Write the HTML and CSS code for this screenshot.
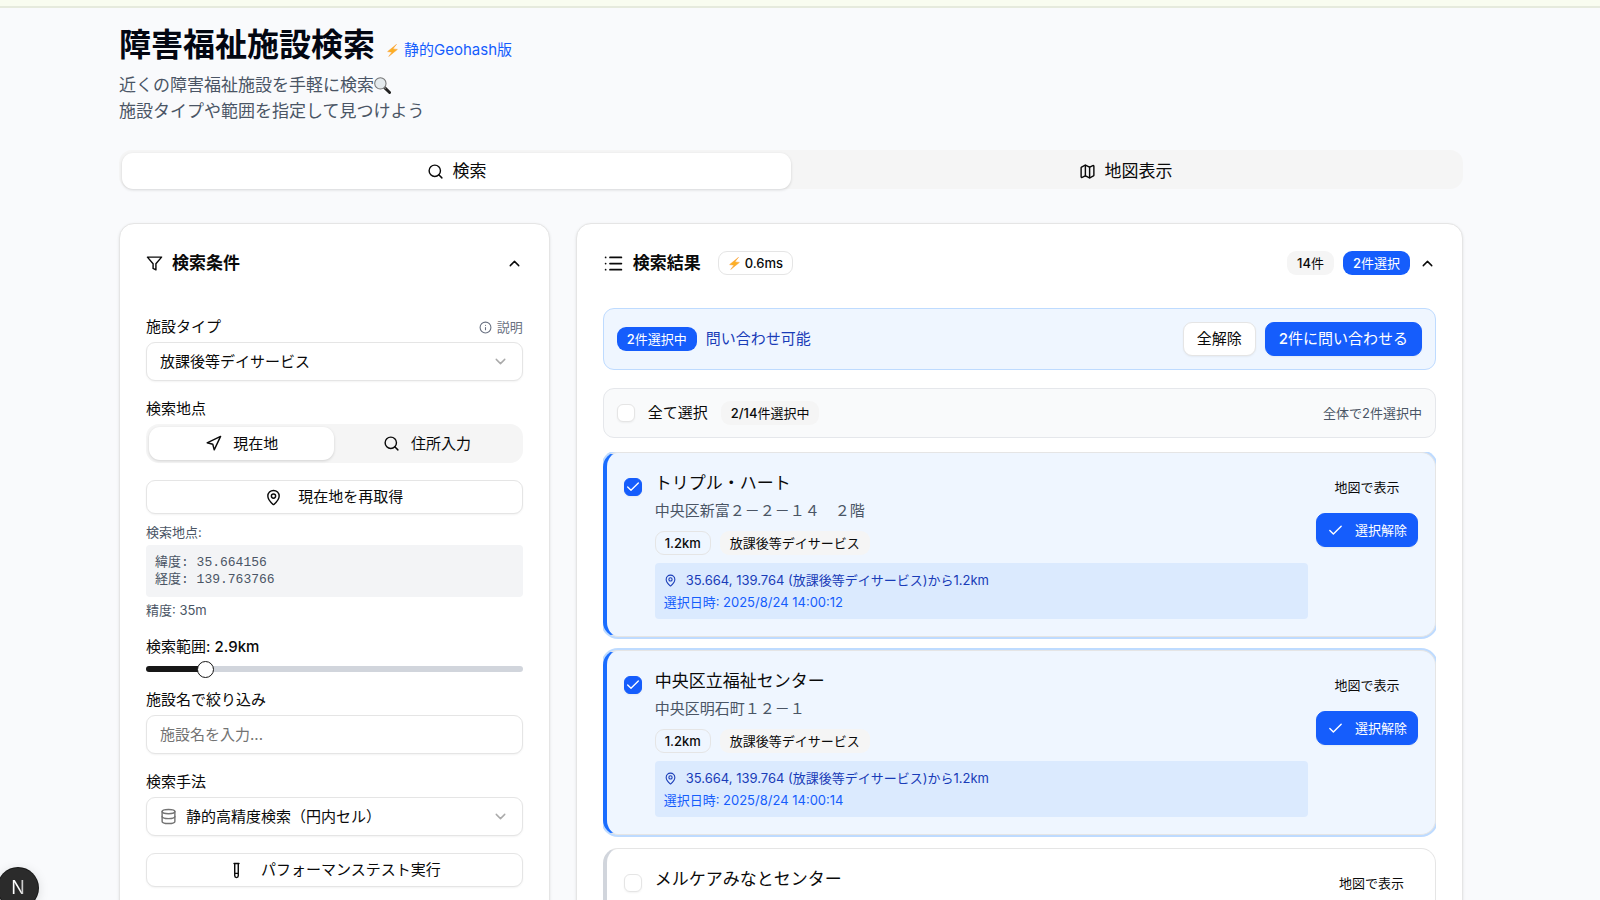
FILE: index.html
```html
<!DOCTYPE html>
<html lang="ja">

<head>
  <meta charset="UTF-8">
  <meta name="viewport" content="width=device-width, initial-scale=1.0">
  <title>障害福祉施設検索</title>

  <link rel="stylesheet" href="styles.css">
</head>

<body>
  <!-- shared icons -->
  <svg class="sprite" aria-hidden="true">
    <symbol id="i-search" viewBox="0 0 24 24"><circle cx="11" cy="11" r="8" /><path d="m21 21-4.3-4.3" /></symbol>
    <symbol id="i-map" viewBox="0 0 24 24"><path d="M14.106 5.553a2 2 0 0 0 1.788 0l3.659-1.83A1 1 0 0 1 21 4.619v12.764a1 1 0 0 1-.553.894l-4.553 2.277a2 2 0 0 1-1.788 0l-4.212-2.106a2 2 0 0 0-1.788 0l-3.659 1.83A1 1 0 0 1 3 19.381V6.618a1 1 0 0 1 .553-.894l4.553-2.277a2 2 0 0 1 1.788 0z" /><path d="M15 5.764v15M9 3.236v15" /></symbol>
    <symbol id="i-filter" viewBox="0 0 24 24"><path d="M22 3H2l8 9.46V19l4 2v-8.54z" /></symbol>
    <symbol id="i-up" viewBox="0 0 24 24"><path d="m18 15-6-6-6 6" /></symbol>
    <symbol id="i-down" viewBox="0 0 24 24"><path d="m6 9 6 6 6-6" /></symbol>
    <symbol id="i-info" viewBox="0 0 24 24"><circle cx="12" cy="12" r="10" /><path d="M12 16v-4M12 8h.01" /></symbol>
    <symbol id="i-nav" viewBox="0 0 24 24"><path d="m3 11 19-9-9 19-2-8z" /></symbol>
    <symbol id="i-pin" viewBox="0 0 24 24"><path d="M20 10c0 4.993-5.539 10.193-7.399 11.799a1 1 0 0 1-1.202 0C9.539 20.193 4 14.993 4 10a8 8 0 0 1 16 0" /><circle cx="12" cy="10" r="3" /></symbol>
    <symbol id="i-db" viewBox="0 0 24 24"><ellipse cx="12" cy="5" rx="9" ry="3" /><path d="M3 5v14a9 3 0 0 0 18 0V5" /><path d="M3 12a9 3 0 0 0 18 0" /></symbol>
    <symbol id="i-tube" viewBox="0 0 24 24"><path d="M14.5 2v17.5c0 1.4-1.1 2.5-2.5 2.5s-2.5-1.1-2.5-2.5V2M8.5 2h7M14.5 16h-5" /></symbol>
    <symbol id="i-list" viewBox="0 0 24 24"><path d="M3 5h.01M3 12h.01M3 19h.01M8 5h13M8 12h13M8 19h13" /></symbol>
    <symbol id="i-check" viewBox="0 0 24 24"><path d="M20 6 9 17l-5-5" /></symbol>
    <symbol id="i-bolt" viewBox="0 0 24 24"><path d="M19 1 3 14l8 1-6 8 16-13-8-1z" fill="#fdb022" stroke="#f9a23b" stroke-width="1" /></symbol>
    <symbol id="i-glass" viewBox="0 0 24 24"><path d="m15 15 7 7" stroke="#222" stroke-width="4" /><path d="m13 13 3 3" stroke="#777" stroke-width="2" /><circle cx="9" cy="9" r="8" fill="#e4eaed" stroke="#777" stroke-width="1.5" /></symbol>
  </svg>

  <div class="top-strip"></div>

  <main class="container">
    <header class="page-header">
      <h1>障害福祉施設検索</h1>
      <span class="version"><svg class="icon icon-sm"><use href="#i-bolt" /></svg>静的Geohash版</span>
    </header>
    <p class="lead">近くの障害福祉施設を手軽に検索<svg class="icon glass"><use href="#i-glass" /></svg><br>施設タイプや範囲を指定して見つけよう</p>

    <nav class="tabs main-tabs">
      <button class="tab active"><svg class="icon"><use href="#i-search" /></svg>検索</button>
      <button class="tab"><svg class="icon"><use href="#i-map" /></svg>地図表示</button>
    </nav>

    <div class="columns">
      <section class="card">
        <div class="card-head">
          <h2><svg class="icon"><use href="#i-filter" /></svg>検索条件</h2>
          <button class="toggle" aria-label="検索条件を閉じる"><svg class="icon"><use href="#i-up" /></svg></button>
        </div>

        <form class="conditions">
          <div class="field first-field">
            <div class="label-row">
              <label for="type">施設タイプ</label>
              <button type="button" class="help"><svg class="icon icon-sm"><use href="#i-info" /></svg>説明</button>
            </div>
            <div class="select">
              <select id="type"><option>放課後等デイサービス</option></select>
              <svg class="icon arrow"><use href="#i-down" /></svg>
            </div>
          </div>

          <div class="field">
            <span class="label">検索地点</span>
            <div class="tabs">
              <button type="button" class="tab active"><svg class="icon"><use href="#i-nav" /></svg>現在地</button>
              <button type="button" class="tab"><svg class="icon"><use href="#i-search" /></svg>住所入力</button>
            </div>
          </div>

          <div class="location">
            <button type="button" class="btn"><svg class="icon"><use href="#i-pin" /></svg>現在地を再取得</button>
            <div class="position">
              <span>検索地点:</span>
              <div class="coords">緯度: 35.664156<br>経度: 139.763766</div>
              <span>精度: 35m</span>
            </div>
          </div>

          <div class="field range-field">
            <label for="range">検索範囲: <b>2.9km</b></label>
            <input type="range" id="range" min="0.1" max="20" step="0.1" value="2.9">
          </div>

          <div class="field">
            <label for="name">施設名で絞り込み</label>
            <input type="text" id="name" class="text-input" placeholder="施設名を入力...">
          </div>

          <div class="field">
            <label for="method">検索手法</label>
            <div class="select">
              <svg class="icon db"><use href="#i-db" /></svg>
              <select id="method"><option>静的高精度検索（円内セル）</option></select>
              <svg class="icon arrow"><use href="#i-down" /></svg>
            </div>
          </div>

          <button type="button" class="btn"><svg class="icon"><use href="#i-tube" /></svg>パフォーマンステスト実行</button>
        </form>
      </section>

      <section class="card results">
        <div class="card-head">
          <h2><svg class="icon icon-lg"><use href="#i-list" /></svg>検索結果</h2>
          <span class="badge outline time"><svg class="icon icon-sm"><use href="#i-bolt" /></svg><b>0.6ms</b></span>
          <div class="counts">
            <span class="badge gray"><b>14</b>件</span>
            <span class="badge blue"><b>2</b>件選択</span>
            <button class="toggle" aria-label="検索結果を閉じる"><svg class="icon"><use href="#i-up" /></svg></button>
          </div>
        </div>

        <div class="banner">
          <span class="badge blue"><b>2</b>件選択中</span>
          <span class="banner-text">問い合わせ可能</span>
          <button class="btn">全解除</button>
          <button class="btn primary"><span><b>2</b>件に問い合わせる</span></button>
        </div>

        <div class="select-all">
          <input type="checkbox" id="all">
          <label for="all">全て選択</label>
          <span class="badge gray"><b>2/14</b>件選択中</span>
          <span class="total">全体で2件選択中</span>
        </div>

        <div class="list">
          <article class="item selected">
            <input type="checkbox" id="f1" checked>
            <div class="info">
              <h3><label for="f1">トリプル・ハート</label></h3>
              <p class="address">中央区新富２－２－１４　２階</p>
              <div class="badges">
                <span class="badge outline"><b>1.2km</b></span>
                <span class="badge gray">放課後等デイサービス</span>
              </div>
              <div class="origin">
                <p><svg class="icon icon-sm"><use href="#i-pin" /></svg>35.664, 139.764 (放課後等デイサービス)から1.2km</p>
                <p class="date">選択日時: 2025/8/24 14:00:12</p>
              </div>
            </div>
            <div class="actions">
              <button class="btn ghost">地図で表示</button>
              <button class="btn primary small"><svg class="icon"><use href="#i-check" /></svg>選択解除</button>
            </div>
          </article>

          <article class="item selected">
            <input type="checkbox" id="f2" checked>
            <div class="info">
              <h3><label for="f2">中央区立福祉センター</label></h3>
              <p class="address">中央区明石町１２－１</p>
              <div class="badges">
                <span class="badge outline"><b>1.2km</b></span>
                <span class="badge gray">放課後等デイサービス</span>
              </div>
              <div class="origin">
                <p><svg class="icon icon-sm"><use href="#i-pin" /></svg>35.664, 139.764 (放課後等デイサービス)から1.2km</p>
                <p class="date">選択日時: 2025/8/24 14:00:14</p>
              </div>
            </div>
            <div class="actions">
              <button class="btn ghost">地図で表示</button>
              <button class="btn primary small"><svg class="icon"><use href="#i-check" /></svg>選択解除</button>
            </div>
          </article>

          <article class="item">
            <input type="checkbox" id="f3">
            <div class="info">
              <h3><label for="f3">メルケアみなとセンター</label></h3>
            </div>
            <div class="actions">
              <button class="btn ghost">地図で表示</button>
            </div>
          </article>
        </div>
      </section>
    </div>
  </main>

  <button class="dev-badge" aria-label="Next.js"><span>N</span></button>
</body>

</html>
```
FILE: styles.css
```css
* {
  box-sizing: border-box;
}

body {
  background: #f9fafc;
  color: #0a0a0a;
  font-family: Inter, "Noto Sans CJK JP", sans-serif;
  font-size: 15px;
  line-height: 22px;
  margin: 0;
}

h1,
h2,
h3,
p {
  margin: 0;
}

b {
  font-weight: 500;
}

button,
input,
select {
  color: inherit;
  font: inherit;
}

button {
  background: none;
  border: 0;
  cursor: pointer;
  padding: 0;
}

.sprite {
  display: none;
}

.icon {
  fill: none;
  flex: none;
  height: 17px;
  stroke: currentColor;
  stroke-linecap: round;
  stroke-linejoin: round;
  stroke-width: 2;
  width: 17px;
}

.icon-sm {
  height: 13px;
  width: 13px;
}

.icon-lg {
  height: 21px;
  width: 21px;
}

.top-strip {
  background: #f9fcf0;
  border-bottom: 2px solid #e6eadd;
  height: 8px;
}

.container {
  margin: 0 auto;
  max-width: 1398px;
  padding: 17px 36px 34px 18px;
}

/* header */
.page-header {
  align-items: flex-end;
  display: flex;
  gap: 11px;
}

h1 {
  color: #030712;
  font-size: 32px;
  line-height: 40px;
}

.version {
  align-items: center;
  color: #155dfc;
  display: flex;
  gap: 5px;
  line-height: 30px;
}

.lead {
  color: #4a5565;
  font-size: 17px;
  line-height: 26px;
  margin-top: 7px;
}

.glass {
  vertical-align: -3px;
}

/* tabs */
.tabs {
  background: #f5f5f5;
  border-radius: 13px;
  display: grid;
  grid-template-columns: 1fr 1fr;
  height: 39px;
  padding: 3px;
}

.tab {
  align-items: center;
  border-radius: 11px;
  display: flex;
  gap: 11px;
  justify-content: center;
}

.tab.active {
  background: #fff;
  box-shadow: 0 1px 3px rgba(0, 0, 0, 0.15);
}

.main-tabs {
  font-size: 17px;
  margin-top: 26px;
  padding-bottom: 0;
}

.main-tabs .tab {
  gap: 9px;
}

/* cards */
.columns {
  display: grid;
  gap: 26px;
  grid-template-columns: repeat(3, 1fr);
  margin-top: 34px;
}

.card {
  background: #fff;
  border: 1px solid #e5e5e5;
  border-radius: 15px;
  box-shadow: 0 1px 3px rgba(0, 0, 0, 0.1);
  min-width: 0;
  padding: 26px;
}

.results {
  grid-column: span 2;
}

.card-head {
  align-items: center;
  display: flex;
  height: 26px;
  justify-content: space-between;
  margin-bottom: 32px;
}

h2 {
  align-items: center;
  display: flex;
  font-size: 17px;
  gap: 9px;
}

.toggle {
  display: flex;
}

.time {
  gap: 4px;
  margin-left: 17px;
}

.counts {
  align-items: center;
  display: flex;
  gap: 9px;
  margin-left: auto;
}

/* search conditions */
.conditions {
  display: flex;
  flex-direction: column;
  gap: 17px;
}

.field {
  display: flex;
  flex-direction: column;
  gap: 4px;
}

.first-field {
  padding-top: 8px;
}

.label-row {
  align-items: center;
  display: flex;
  justify-content: space-between;
}

.help {
  align-items: center;
  color: #6a7282;
  display: flex;
  font-size: 13px;
  gap: 5px;
}

.select,
.text-input {
  background: #fff;
  border: 1px solid #e5e5e5;
  border-radius: 9px;
  box-shadow: 0 1px 2px rgba(0, 0, 0, 0.05);
  height: 39px;
  padding: 0 13px;
}

.select {
  align-items: center;
  display: flex;
  gap: 9px;
}

.select select {
  appearance: none;
  background: none;
  border: 0;
  flex: 1;
  min-width: 0;
  padding: 0;
}

.arrow {
  color: #737373;
  opacity: 0.6;
}

.db {
  color: #737373;
}

.text-input::placeholder {
  color: #737373;
}

.btn {
  align-items: center;
  background: #fff;
  border: 1px solid #e5e5e5;
  border-radius: 9px;
  box-shadow: 0 1px 2px rgba(0, 0, 0, 0.05);
  display: flex;
  gap: 16px;
  height: 34px;
  justify-content: center;
  padding: 0 13px;
}

.btn.primary {
  background: #155dfc;
  border-color: #155dfc;
  color: #fff;
}

.btn.ghost {
  background: none;
  border-color: transparent;
  box-shadow: none;
  font-size: 13px;
}

.btn.small {
  font-size: 13px;
  gap: 11px;
  padding: 0 10px;
}

.location {
  display: flex;
  flex-direction: column;
  gap: 9px;
}

.position {
  color: #4a5565;
  display: flex;
  flex-direction: column;
  font-size: 13px;
  gap: 4px;
  line-height: 18px;
}

.coords {
  background: #f3f4f6;
  border-radius: 4px;
  font-family: "Liberation Mono", "Noto Sans CJK JP", monospace;
  line-height: 17px;
  padding: 9px;
}

.range-field {
  gap: 8px;
}

input[type="range"] {
  appearance: none;
  background: linear-gradient(to right, #171717 16%, #d1d5dc 16%);
  border-radius: 3px;
  height: 6px;
  margin: 0;
  width: 100%;
}

input[type="range"]::-webkit-slider-thumb {
  appearance: none;
  background: #fff;
  border: 1px solid #171717;
  border-radius: 50%;
  height: 17px;
  width: 17px;
}

/* badges */
.badge {
  align-items: center;
  border: 1px solid transparent;
  border-radius: 9px;
  display: inline-flex;
  font-size: 13px;
  height: 24px;
  padding: 0 9px;
  white-space: nowrap;
}

.badge.outline {
  border-color: #e5e5e5;
}

.badge.gray {
  background: #f5f5f5;
}

.badge.blue {
  background: #155dfc;
  color: #fff;
}

/* results */
.banner,
.select-all {
  align-items: center;
  border: 1px solid #bedbff;
  border-radius: 11px;
  display: flex;
  gap: 9px;
  padding: 13px;
}

.banner {
  background: #eff6ff;
}

.banner-text {
  color: #193cb8;
  margin-right: auto;
}

.select-all {
  background: #f9fafb;
  border-color: #e5e7eb;
  gap: 13px;
  margin-top: 18px;
  padding: 12px 13px;
}

.total {
  color: #4a5565;
  font-size: 13px;
  margin-left: auto;
}

input[type="checkbox"] {
  appearance: none;
  background: #fff;
  border: 1px solid #e5e5e5;
  border-radius: 6px;
  box-shadow: 0 1px 2px rgba(0, 0, 0, 0.05);
  flex: none;
  height: 18px;
  margin: 0;
  width: 18px;
}

input[type="checkbox"]:checked {
  background: #155dfc url("data:image/svg+xml,%3Csvg xmlns='http://www.w3.org/2000/svg' viewBox='0 0 24 24' fill='none' stroke='white' stroke-width='2' stroke-linecap='round' stroke-linejoin='round'%3E%3Cpath d='M20 6 9 17l-5-5'/%3E%3C/svg%3E") center / 16px no-repeat;
  border-color: #155dfc;
}

.list {
  display: flex;
  flex-direction: column;
  gap: 13px;
  margin-top: 14px;
  overflow: hidden;
}

.item {
  border: 1px solid #e5e5e5;
  border-left: 4px solid #d1d5dc;
  border-radius: 15px;
  display: flex;
  padding: 17px;
}

.item.selected {
  background: #eff6ff;
  border-left-color: #1a6dff;
  box-shadow: 0 0 0 2px #bedbff;
}

.item > input[type="checkbox"] {
  margin: 8px 13px 0 0;
}

.info {
  flex: 1;
  min-width: 0;
}

h3 {
  font-size: 17px;
  font-weight: 400;
  line-height: 26px;
}

.address {
  color: #4a5565;
  margin-top: 4px;
}

.badges {
  display: flex;
  gap: 9px;
  margin-top: 9px;
}

.origin {
  background: #dbeafe;
  border-radius: 4px;
  color: #193cb8;
  display: flex;
  flex-direction: column;
  font-size: 13px;
  gap: 4px;
  line-height: 18px;
  margin-top: 8px;
  padding: 8px 9px;
}

.origin p {
  align-items: center;
  display: flex;
  gap: 9px;
}

.origin .date {
  color: #155dfc;
}

.actions {
  display: flex;
  flex-direction: column;
  gap: 9px;
  margin-left: 8px;
  min-width: 92px;
}

/* floating dev tools button */
.dev-badge {
  background: #2b2b2b;
  border-radius: 50%;
  bottom: -8px;
  box-shadow: 0 0 0 1px #171717, 0 2px 12px rgba(0, 0, 0, 0.15);
  font-size: 18px;
  height: 40px;
  left: -2px;
  position: fixed;
  width: 40px;
}

.dev-badge span {
  background: linear-gradient(to right, #fff 65%, #999);
  background-clip: text;
  color: transparent;
}
```
